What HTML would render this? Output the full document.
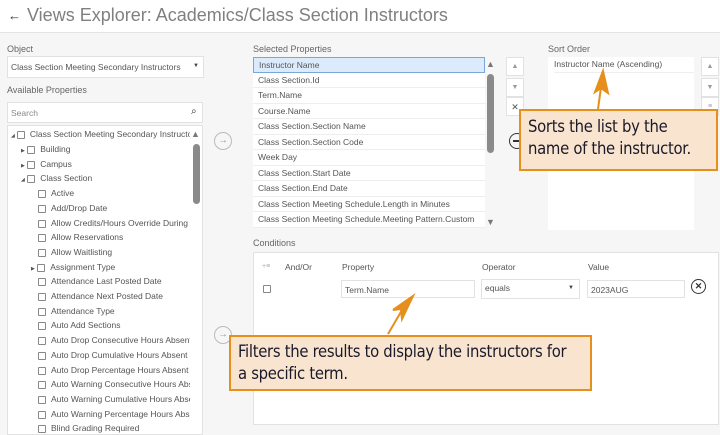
<!DOCTYPE html>
<html><head><style>
*{box-sizing:border-box;margin:0;padding:0}
body{width:720px;height:427px;overflow:hidden;background:#f6f6f6;font-family:"Liberation Sans",sans-serif;position:relative;color:#555}
.a{position:absolute}
.lbl{font-size:9px;color:#666}
.t{font-size:8.5px;color:#555;white-space:nowrap}
.box{background:#fff;border:1px solid #e2e2e2}
.cb{display:inline-block;width:8px;height:8px;border:1px solid #888;border-radius:1px;vertical-align:middle;margin-right:5px;background:#fff}
.row{position:absolute;left:0;right:0;height:15.5px;border-bottom:1px solid #eee;padding-left:5px;line-height:15px;font-size:8.5px;color:#555;background:#fff}
.btn{position:absolute;width:18px;height:19px;background:#fff;border:1px solid #e2e2e2;font-size:7px;color:#999;text-align:center;line-height:18px}
.call{position:absolute;background:#f9e5cf;border:2px solid #e58f1c;color:#1a1a2a;font-size:16.5px;line-height:22px;padding:5px 7px;font-family:"DejaVu Sans Condensed","Liberation Sans",sans-serif;letter-spacing:-0.3px}
</style></head><body>
<div class="a" style="left:0;top:0;width:720px;height:33px;background:#fff;border-bottom:1px solid #e4e4e4"></div>
<div class="a" style="left:8px;top:8px;font-size:13px;color:#333;font-weight:bold">&#x2190;</div>
<div class="a" style="left:27px;top:5px;font-size:18px;color:#808080">Views Explorer: Academics/Class Section Instructors</div>

<div class="a lbl" style="left:7px;top:44px">Object</div>
<div class="a box" style="left:7px;top:56px;width:197px;height:22px"><span class="a t" style="left:3px;top:5px">Class Section Meeting Secondary Instructors</span><span class="a" style="left:185px;top:6px;font-size:6px;color:#444">&#9660;</span></div>
<div class="a lbl" style="left:7px;top:85px">Available Properties</div>
<div class="a box" style="left:7px;top:102px;width:196px;height:21px"><span class="a t" style="left:3px;top:5px;color:#888">Search</span><span class="a" style="left:183px;top:3px;font-size:10px;color:#333">&#x2315;</span></div>
<div class="a box" style="left:7px;top:125px;width:196px;height:310px;overflow:hidden">
<div class="a" style="left:183px;top:3px;font-size:9px;color:#777">&#9650;</div>
<div class="a" style="left:185px;top:18px;width:7px;height:60px;background:#8a8a8a;border-radius:4px"></div>
<div class="a" style="left:0;top:0;width:182px;height:310px;overflow:hidden">
<div class="a t" style="left:3px;top:3px"><span style="font-size:5px">&#9698;</span><span class="cb" style="margin-left:2px"></span>Class Section Meeting Secondary Instructors</div>
<div class="a t" style="left:13px;top:18px"><span style="font-size:5px">&#9654;</span> <span class="cb"></span>Building</div>
<div class="a t" style="left:13px;top:33px"><span style="font-size:5px">&#9654;</span> <span class="cb"></span>Campus</div>
<div class="a t" style="left:13px;top:47px"><span style="font-size:5px">&#9698;</span> <span class="cb"></span>Class Section</div>
<div class="a t" style="left:30px;top:62px"><span class="cb"></span>Active</div>
<div class="a t" style="left:30px;top:77px"><span class="cb"></span>Add/Drop Date</div>
<div class="a t" style="left:30px;top:92px"><span class="cb"></span>Allow Credits/Hours Override During Registration</div>
<div class="a t" style="left:30px;top:106px"><span class="cb"></span>Allow Reservations</div>
<div class="a t" style="left:30px;top:121px"><span class="cb"></span>Allow Waitlisting</div>
<div class="a t" style="left:23px;top:136px"><span style="font-size:5px">&#9654;</span> <span class="cb"></span>Assignment Type</div>
<div class="a t" style="left:30px;top:150px"><span class="cb"></span>Attendance Last Posted Date</div>
<div class="a t" style="left:30px;top:165px"><span class="cb"></span>Attendance Next Posted Date</div>
<div class="a t" style="left:30px;top:180px"><span class="cb"></span>Attendance Type</div>
<div class="a t" style="left:30px;top:194px"><span class="cb"></span>Auto Add Sections</div>
<div class="a t" style="left:30px;top:209px"><span class="cb"></span>Auto Drop Consecutive Hours Absent</div>
<div class="a t" style="left:30px;top:224px"><span class="cb"></span>Auto Drop Cumulative Hours Absent</div>
<div class="a t" style="left:30px;top:239px"><span class="cb"></span>Auto Drop Percentage Hours Absent</div>
<div class="a t" style="left:30px;top:253px"><span class="cb"></span>Auto Warning Consecutive Hours Absent</div>
<div class="a t" style="left:30px;top:268px"><span class="cb"></span>Auto Warning Cumulative Hours Absent</div>
<div class="a t" style="left:30px;top:283px"><span class="cb"></span>Auto Warning Percentage Hours Absent</div>
<div class="a t" style="left:30px;top:297px"><span class="cb"></span>Blind Grading Required</div>
</div></div>

<div class="a" style="left:214px;top:132px;width:18px;height:18px;border:1.5px solid #bbb;border-radius:50%;color:#999;font-size:10px;text-align:center;line-height:15px">&#x2192;</div>
<div class="a" style="left:214px;top:326px;width:18px;height:18px;border:1.5px solid #bbb;border-radius:50%;color:#999;font-size:10px;text-align:center;line-height:15px">&#x2192;</div>

<div class="a lbl" style="left:253px;top:44px">Selected Properties</div>
<div class="a" style="left:253px;top:57px;width:232px;height:171px;overflow:hidden;background:#fff">
<div class="row" style="top:0;background:#dcebfb;border:1px solid #7aa6d8">Instructor Name</div>
<div class="row" style="top:15.5px">Class Section.Id</div>
<div class="row" style="top:31px">Term.Name</div>
<div class="row" style="top:46.5px">Course.Name</div>
<div class="row" style="top:62px">Class Section.Section Name</div>
<div class="row" style="top:77.5px">Class Section.Section Code</div>
<div class="row" style="top:93px">Week Day</div>
<div class="row" style="top:108.5px">Class Section.Start Date</div>
<div class="row" style="top:124px">Class Section.End Date</div>
<div class="row" style="top:139.5px">Class Section Meeting Schedule.Length in Minutes</div>
<div class="row" style="top:155px">Class Section Meeting Schedule.Meeting Pattern.Custom</div>
</div>
<div class="a" style="left:486px;top:59px;font-size:9px;color:#777">&#9650;</div>
<div class="a" style="left:487px;top:74px;width:7px;height:79px;background:#8a8a8a;border-radius:4px"></div>
<div class="a" style="left:486px;top:217px;font-size:9px;color:#777">&#9660;</div>

<div class="btn" style="left:506px;top:57px">&#9650;</div>
<div class="btn" style="left:506px;top:78px">&#9660;</div>
<div class="btn" style="left:506px;top:97px;font-size:9px;color:#555">&#x2715;</div>
<div class="a" style="left:509px;top:133px;width:16px;height:16px;border:1.5px solid #333;border-radius:50%"><div class="a" style="left:3px;top:6px;width:7px;height:1.5px;background:#333"></div></div>

<div class="a lbl" style="left:548px;top:44px">Sort Order</div>
<div class="a" style="left:548px;top:57px;width:146px;height:173px;background:#fff"><div class="a t" style="left:6px;top:2px;right:0;height:14px;border-bottom:1px solid #eee">Instructor Name (Ascending)</div></div>
<div class="btn" style="left:701px;top:57px">&#9650;</div>
<div class="btn" style="left:701px;top:78px">&#9660;</div>
<div class="btn" style="left:701px;top:97px">&#8801;</div>

<div class="a lbl" style="left:253px;top:238px">Conditions</div>
<div class="a box" style="left:253px;top:252px;width:466px;height:173px">
<span class="a" style="left:8px;top:10px;font-size:7px;color:#aaa">+&#8801;</span>
<span class="a t" style="left:31px;top:9px">And/Or</span>
<span class="a t" style="left:88px;top:9px">Property</span>
<span class="a t" style="left:228px;top:9px">Operator</span>
<span class="a t" style="left:334px;top:9px">Value</span>
<span class="a cb" style="left:9px;top:32px"></span>
<div class="a box" style="left:87px;top:27px;width:134px;height:18px"><span class="a t" style="left:3px;top:4px">Term.Name</span></div>
<div class="a box" style="left:227px;top:26px;width:99px;height:20px"><span class="a t" style="left:3px;top:3px">equals</span><span class="a" style="left:86px;top:5px;font-size:6px;color:#444">&#9660;</span></div>
<div class="a box" style="left:333px;top:27px;width:98px;height:18px"><span class="a t" style="left:3px;top:4px">2023AUG</span></div>
<div class="a" style="left:437px;top:26px;width:15px;height:15px;border:1.5px solid #333;border-radius:50%;font-size:9px;text-align:center;line-height:12px;color:#333;font-weight:bold">&#x2715;</div>
</div>

<svg class="a" style="left:0;top:0" width="720" height="427">
<g stroke="#e58f1c" stroke-width="2" fill="#e58f1c">
<line x1="598" y1="109" x2="602" y2="80"/><polygon points="603,71 595,92 601,88 608,93"/>
<line x1="388" y1="334" x2="405" y2="305"/><polygon points="413,296 393,310 401,309 402,319"/>
</g></svg>

<div class="call" style="left:519px;top:109px;width:199px;height:62px">Sorts the list by the<br>name of the instructor.</div>
<div class="call" style="left:229px;top:335px;width:363px;height:56px;padding-top:4px">Filters the results to display the instructors for<br>a specific term.</div>
</body></html>
